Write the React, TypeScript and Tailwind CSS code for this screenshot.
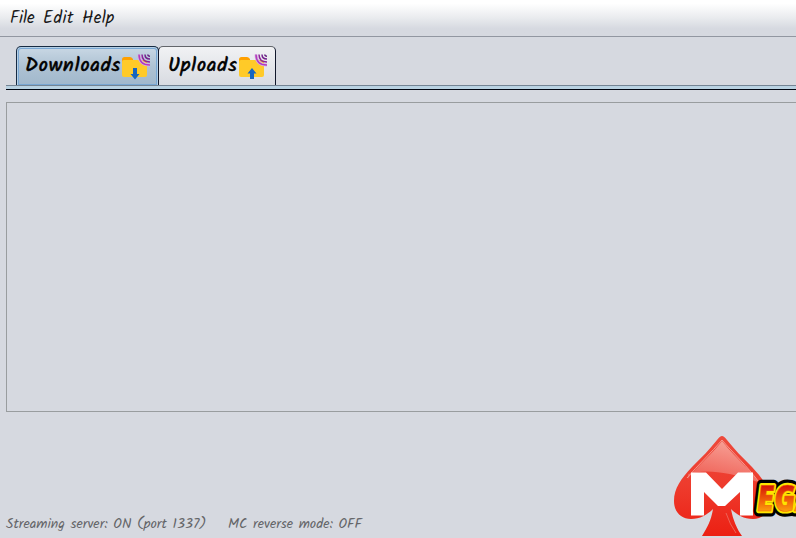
type FolderProps = { direction: 'down' | 'up' };

const handwriting = "font-['Kalam','Lato',cursive]";

function FolderIcon({ direction }: FolderProps) {
  return (
    <svg width="30" height="30" viewBox="0 0 30 30" className="mt-px shrink-0">
      <path d="M1 9V6.500Q1 4 3.500 4H9Q10.500 4 12 6V11H1Z" fill="#ffa000" />
      <path d="M1 9Q1 7 3 7H24Q26 7 26 9V22Q26 24 24 24H3Q1 24 1 22Z" fill="#ffca28" />
      <g fill="none" stroke="#d6b5df" strokeWidth="3">
        <path d="M18 1.500Q18 12 29 12" />
      </g>
      <g fill="none" strokeWidth="1.500">
        <path d="M18 1.500Q18 12 29 12" stroke="#b43bc0" />
        <path d="M21 1.500Q21 9 29 9" stroke="#8d249b" />
        <path d="M24 1.500Q24 6 29 6" stroke="#73208c" />
        <path d="M26.800 1.500Q26.800 3.200 29 3.200" stroke="#652081" />
      </g>
      {direction === 'down' ? (
        <path d="M12 15H16V21H18.500L14 26.500L9.500 21H12Z" fill="#1565c0" />
      ) : (
        <path d="M12 26H16V20.500H18.500L14 15L9.500 20.500H12Z" fill="#1565c0" />
      )}
    </svg>
  );
}

function MegaLogo() {
  return (
    <svg width="126" height="104" viewBox="0 0 126 104" className="block">
      <defs>
        <linearGradient id="spade" x1="0" y1="0" x2="0" y2="1">
          <stop offset="0" stopColor="#ed4a3c" />
          <stop offset=".5" stopColor="#ee3b2d" />
          <stop offset="1" stopColor="#ec2013" />
        </linearGradient>
        <linearGradient id="gloss" x1=".7" y1="0" x2=".3" y2="1">
          <stop offset="0" stopColor="#f9b3a9" />
          <stop offset="1" stopColor="#ef6258" />
        </linearGradient>
        <linearGradient id="lettering" x1="0" y1="0" x2="0" y2="1">
          <stop offset=".25" stopColor="#d51408" />
          <stop offset=".6" stopColor="#f36b09" />
          <stop offset=".85" stopColor="#ffb210" />
        </linearGradient>
      </defs>
      <path
        d="M52 2Q50 2 47 6C40 15 32 23 22 33C11 45 4 54 4 67C4 78 11 85 21 85C30 85 37 81 43 75C41 87 37 94 32 102H72C67 95 63 86 61 75C67 81 74 85 83 85C93 85 100 78 100 67C100 54 93 45 82 33C72 23 64 15 57 6Q54 2 52 2Z"
        fill="url(#spade)"
      />
      <path d="M52 7C45 16 35 26 26 35Q21 40 18 45V40C35 35 56 37 88 48Q84 41 77 34C68 25 59 16 52 7Z" fill="url(#gloss)" opacity=".85" />
      <path d="M52 6C42 18 27 32 17 44M52 6C63 19 78 33 88 47" fill="none" stroke="#f69b91" strokeWidth="1" />
      <path d="M56 79Q60 91 66 99" fill="none" stroke="#ee6458" strokeWidth="1" />
      <path d="M21 38.500H36L52 55L68 38.500H83V81.500H70V58L55 72H48L34 58V81.500H21Z" fill="#fff" />
      <g
        className="font-['Open_Sans','Liberation_Sans',sans-serif] font-extrabold italic"
        fontSize="36"
        strokeLinejoin="round"
        transform="translate(87.500 77) skewX(3)"
      >
        <text textLength="59" lengthAdjust="spacingAndGlyphs" stroke="#000" strokeWidth="11">EGA</text>
        <text textLength="59" lengthAdjust="spacingAndGlyphs" stroke="#ffe500" strokeWidth="4.500">EGA</text>
        <text textLength="59" lengthAdjust="spacingAndGlyphs" fill="url(#lettering)" stroke="#ef6509" strokeWidth=".5">EGA</text>
      </g>
    </svg>
  );
}

export default function App() {
  return (
    <div className={`flex h-[538px] w-[796px] flex-col overflow-hidden bg-[#d6d9e0] text-black ${handwriting}`}>
      <nav className="flex h-[37px] shrink-0 items-start border-b border-[#9297a1] bg-linear-to-b from-white from-10% via-[#e9ebee] via-50% to-[#d6d9e0] to-80% pl-[10px] pt-[7px] text-[17px] leading-6 text-[#181818]">
        <span className="w-[33px]">File</span>
        <span className="w-[39px] tracking-[0.5px]">Edit</span>
        <span className="w-10 tracking-[0.3px]">Help</span>
      </nav>
      <div className="mt-[9px] flex h-10 shrink-0 pl-4 text-xl" role="tablist">
        <button className="flex w-[143px] rounded-t-[5px] border border-b-0 border-[#172b43] bg-linear-to-b from-[#c9d8e5] via-[#aec2d3] to-[#a0b7cc] pl-[8px] pt-[5px] shadow-[inset_0_0_0_1px_#b5d0e6,inset_0_0_0_2px_#79a7d3]">
          <span className="w-[96px] whitespace-nowrap pt-px text-left leading-[27px] tracking-[0.9px] [-webkit-text-stroke:0.6px_black]">Downloads</span>
          <FolderIcon direction="down" />
        </button>
        <button className="-ml-px flex w-[118px] rounded-t-[5px] border border-[#11182b] border-t-[#63666b] bg-linear-to-b from-[#f1f2f4] to-[#d8dbe1] pl-[9px] pt-[5px]">
          <span className="w-[70px] whitespace-nowrap pt-px text-left leading-[27px] tracking-[0.9px] [-webkit-text-stroke:0.6px_black]">Uploads</span>
          <FolderIcon direction="up" />
        </button>
      </div>
      <div className="-mt-px ml-[6px] h-[5px] shrink-0 border-b border-t border-b-[#000510] border-t-[#748494] bg-[#b9d2e2]" />
      <main className="ml-[6px] mt-3 h-[310px] shrink-0 border border-r-0 border-[#999d9f]" />
      <footer className="flex h-[126px] items-end justify-between pl-[6px]">
        <div className="flex h-[23px] whitespace-pre text-sm leading-[18px] text-[#646568]">
          <span className="w-[222px]">Streaming server: ON (port 1337)</span>
          <span>MC reverse mode: OFF</span>
        </div>
        <MegaLogo />
      </footer>
    </div>
  );
}
